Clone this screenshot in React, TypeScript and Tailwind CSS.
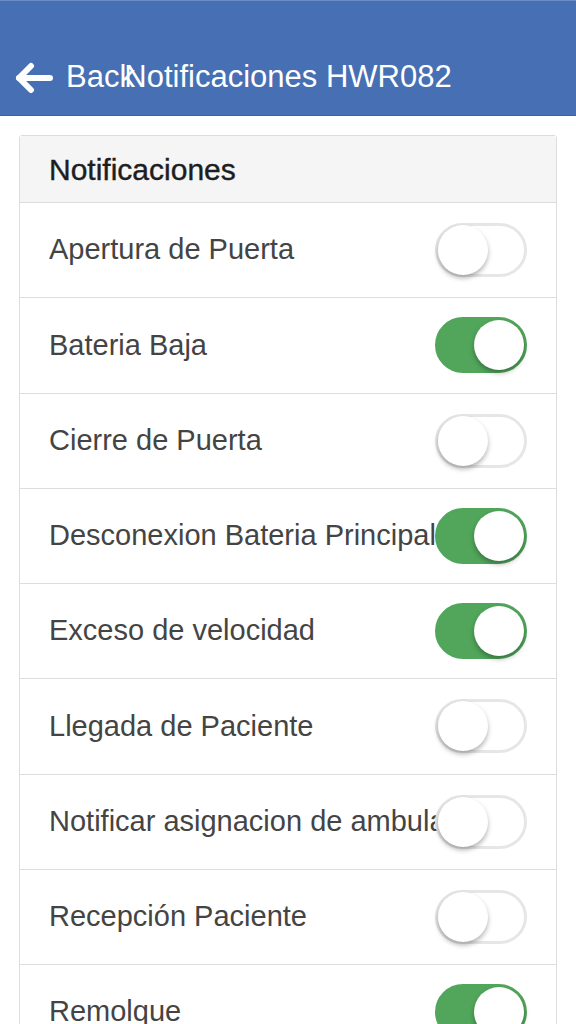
const items = [
  { label: "Apertura de Puerta", on: false },
  { label: "Bateria Baja", on: true },
  { label: "Cierre de Puerta", on: false },
  { label: "Desconexion Bateria Principal", on: true },
  { label: "Exceso de velocidad", on: true },
  { label: "Llegada de Paciente", on: false },
  { label: "Notificar asignacion de ambulancia", on: false },
  { label: "Recepción Paciente", on: false },
  { label: "Remolque", on: true },
  { label: "Salida de Base", on: false },
];

function Toggle({ on }: { on: boolean }) {
  return (
    <div
      className={
        on
          ? "flex h-[56px] w-[92px] items-center justify-end rounded-full border-[3px] border-[#51a65b] bg-[#51a65b]"
          : "flex h-[54px] w-[92px] items-center justify-start rounded-full border-[3px] border-[#e6e6e6] bg-white"
      }
    >
      <div className="h-[50px] w-[50px] rounded-full bg-white shadow-[0_3px_5px_rgba(0,0,0,0.3)]" />
    </div>
  );
}

export default function App() {
  return (
    <div className="h-[1024px] w-full overflow-hidden bg-white font-['Liberation_Sans',Arial,sans-serif]">
      <header className="h-[116px] border-b border-[#3d62a3] border-t border-t-[#6c8cc6] bg-[#466fb4] pt-[39px]">
        <div className="grid h-full items-center">
          <button className="col-start-1 row-start-1 flex items-center gap-[12px] justify-self-start pl-[14px] text-[31px] text-white">
            <svg width="40" height="32" viewBox="0 0 40 32" fill="none" stroke="white" strokeWidth="6" strokeLinecap="round" strokeLinejoin="round">
              <path d="M36 16H5" />
              <path d="M17 4L5 16L17 28" />
            </svg>
            <span>Back</span>
          </button>
          <h1 className="col-start-1 row-start-1 justify-self-center text-[31px] text-white">
            Notificaciones HWR082
          </h1>
        </div>
      </header>

      <div className="mx-[19px] mt-[19px] rounded-[3px] border border-[#dddddd]">
        <div className="flex h-[67px] items-center border-b border-[#dddddd] bg-[#f5f5f5] px-[29px] text-[30px] text-[#1e1e1e] [-webkit-text-stroke:0.4px_#1e1e1e]">
          Notificaciones
        </div>
        {items.map((it) => (
          <div key={it.label} className="grid h-[95.25px] items-center border-b border-[#dddddd] pl-[29px] pr-[29px]">
            <span className="col-start-1 row-start-1 overflow-hidden whitespace-nowrap text-[29px] text-[#444]">
              {it.label}
            </span>
            <div className="col-start-1 row-start-1 justify-self-end">
              <Toggle on={it.on} />
            </div>
          </div>
        ))}
      </div>
    </div>
  );
}
